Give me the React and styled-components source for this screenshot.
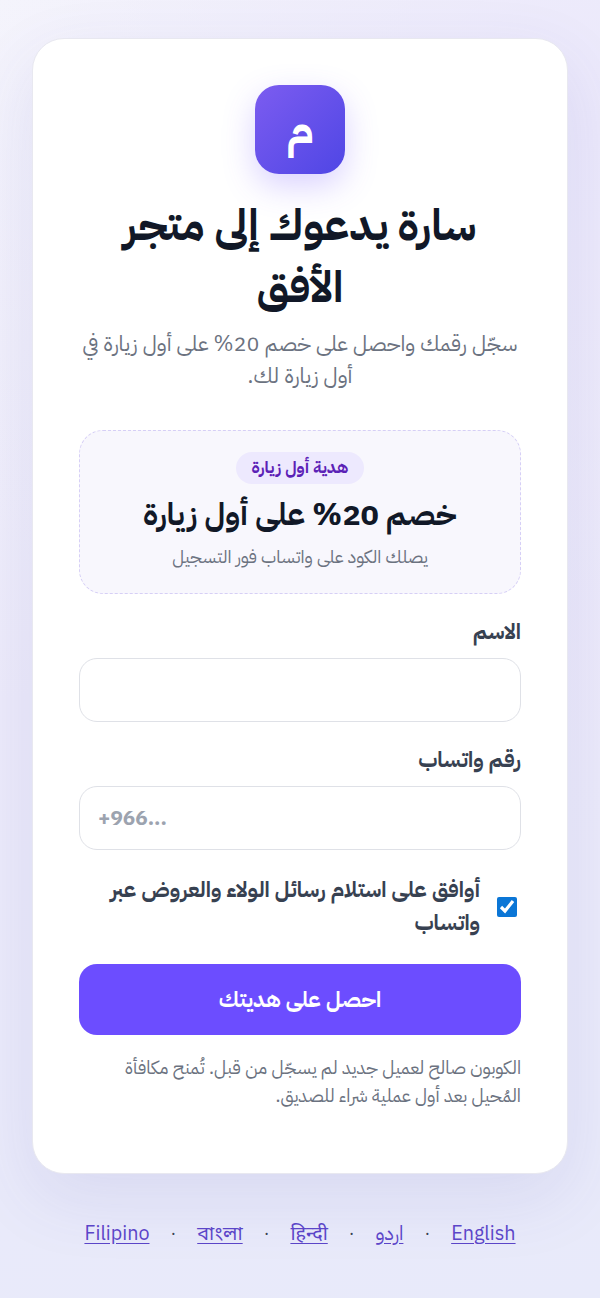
import React from "react";
import styled, { createGlobalStyle } from "styled-components";

const stack = `"IBM Plex Sans Arabic", "IBM Plex Sans", "Noto Sans Arabic", "Noto Sans", "Noto Sans Devanagari", "Noto Sans Bengali", sans-serif`;

const Global = createGlobalStyle`
  html, body { margin: 0; padding: 0; }
  body {
    font-family: ${stack};
    background:
      radial-gradient(circle at 100% 10%, #ebe8fb 0%, rgba(235, 232, 251, 0) 55%),
      linear-gradient(170deg, #f6f6fc 0%, #eceafa 50%, #e8eafa 100%);
    min-height: 1298px;
  }
  * { box-sizing: border-box; }
`;
const Page = styled.main`
  height: 1298px;
  overflow: hidden;
  padding: 38px 32px 0;
  display: flex;
  flex-direction: column;
  direction: rtl;
`;
const Card = styled.section`
  background: #fff;
  border: 1px solid #e8e8f0;
  border-radius: 32px;
  padding: 46px 46px 63px;
  box-shadow: 0 24px 70px rgba(70, 70, 170, 0.1);
  display: flex;
  flex-direction: column;
`;
const Logo = styled.div`
  width: 90px;
  height: 89px;
  border-radius: 24px;
  margin: 0 auto 21px;
  background: linear-gradient(135deg, #7c5cf0, #4f46e5);
  box-shadow: 0 12px 32px rgba(108, 77, 255, 0.25);
  color: #fff;
  font-size: 44px;
  font-weight: 700;
  display: flex;
  align-items: center;
  justify-content: center;
`;
const Title = styled.h1`
  margin: 0 0 9px;
  text-align: center;
  font-size: 43.2px;
  line-height: 62px;
  font-weight: 700;
  color: #111827;
`;
const Subtitle = styled.p`
  margin: 0 0 38px;
  text-align: center;
  font-size: 21.6px;
  line-height: 32px;
  color: #6b7280;
`;
const Gift = styled.div`
  height: 164px;
  border: 1px dashed #d6cff6;
  border-radius: 24px;
  background: #f8f7fd;
  margin-bottom: 24px;
  display: flex;
  flex-direction: column;
  align-items: center;
  padding-top: 21px;
`;
const Badge = styled.span`
  background: #ede9fe;
  color: #5b21b6;
  font-size: 16.8px;
  font-weight: 700;
  height: 32px;
  line-height: 32px;
  padding: 0 15.5px;
  border-radius: 16px;
`;
const GiftTitle = styled.div`
  font-size: 30.6px;
  line-height: 50px;
  font-weight: 700;
  color: #111827;
  margin-top: 6px;
`;
const GiftNote = styled.div`
  font-size: 18px;
  line-height: 26px;
  color: #6b7280;
  margin-top: 4px;
`;
const Label = styled.label`
  display: block;
  font-size: 21.6px;
  line-height: 28px;
  font-weight: 700;
  color: #374151;
  margin-bottom: 12px;
`;
const Input = styled.input`
  display: block;
  width: 100%;
  height: 64px;
  border: 1px solid #dfe1e7;
  border-radius: 18px;
  padding: 0 18px;
  font: 700 20.7px ${stack};
  margin-bottom: 24px;
  background: #fff;
  &::placeholder { color: #9ca3af; }
`;
const Consent = styled.label`
  display: flex;
  align-items: center;
  gap: 17px;
  font-size: 21.6px;
  line-height: 33px;
  font-weight: 700;
  color: #374151;
  padding: 0 4px 0 20px;
  margin-bottom: 24px;
`;
const Check = styled.input`
  width: 20px;
  height: 20px;
  margin: 0;
  flex: none;
  accent-color: #0b76d6;
`;
const Submit = styled.button`
  height: 71px;
  border: 0;
  border-radius: 18px;
  background: #6c4dff;
  color: #fff;
  font: 700 21.6px ${stack};
`;
const Fine = styled.p`
  margin: 19px 0 0;
  font-size: 18.4px;
  line-height: 28px;
  color: #6b7280;
`;
const Langs = styled.nav`
  display: flex;
  justify-content: center;
  gap: 21.25px;
  margin-top: 45px;
  align-items: center;
`;
const Lang = styled.a`
  color: #5b45c8;
  font-size: 19.8px;
  line-height: 30px;
  text-decoration: underline;
  text-underline-offset: 3px;
`;
const Dot = styled.span`
  color: #374151;
  font-size: 16px;
`;
const langs = ["English", "اردو", "हिन्दी", "বাংলা", "Filipino"];

export default function App() {
  return (
    <Page>
      <Global />
      <Card>
        <Logo>م</Logo>
        <Title>سارة يدعوك إلى متجر الأفق</Title>
        <Subtitle>سجّل رقمك واحصل على خصم 20% على أول زيارة في أول زيارة لك.</Subtitle>
        <Gift>
          <Badge>هدية أول زيارة</Badge>
          <GiftTitle>خصم 20% على أول زيارة</GiftTitle>
          <GiftNote>يصلك الكود على واتساب فور التسجيل</GiftNote>
        </Gift>
        <Label>الاسم</Label>
        <Input type="text" />
        <Label>رقم واتساب</Label>
        <Input type="text" placeholder="+966..." dir="ltr" />
        <Consent>
          <Check type="checkbox" defaultChecked />
          <span>أوافق على استلام رسائل الولاء والعروض عبر واتساب</span>
        </Consent>
        <Submit>احصل على هديتك</Submit>
        <Fine>الكوبون صالح لعميل جديد لم يسجّل من قبل. تُمنح مكافأة المُحيل بعد أول عملية شراء للصديق.</Fine>
      </Card>
      <Langs>
        {langs.map((l, i) => (
          <React.Fragment key={l}>
            {i > 0 && <Dot>·</Dot>}
            <Lang href="#">{l}</Lang>
          </React.Fragment>
        ))}
      </Langs>
    </Page>
  );
}
